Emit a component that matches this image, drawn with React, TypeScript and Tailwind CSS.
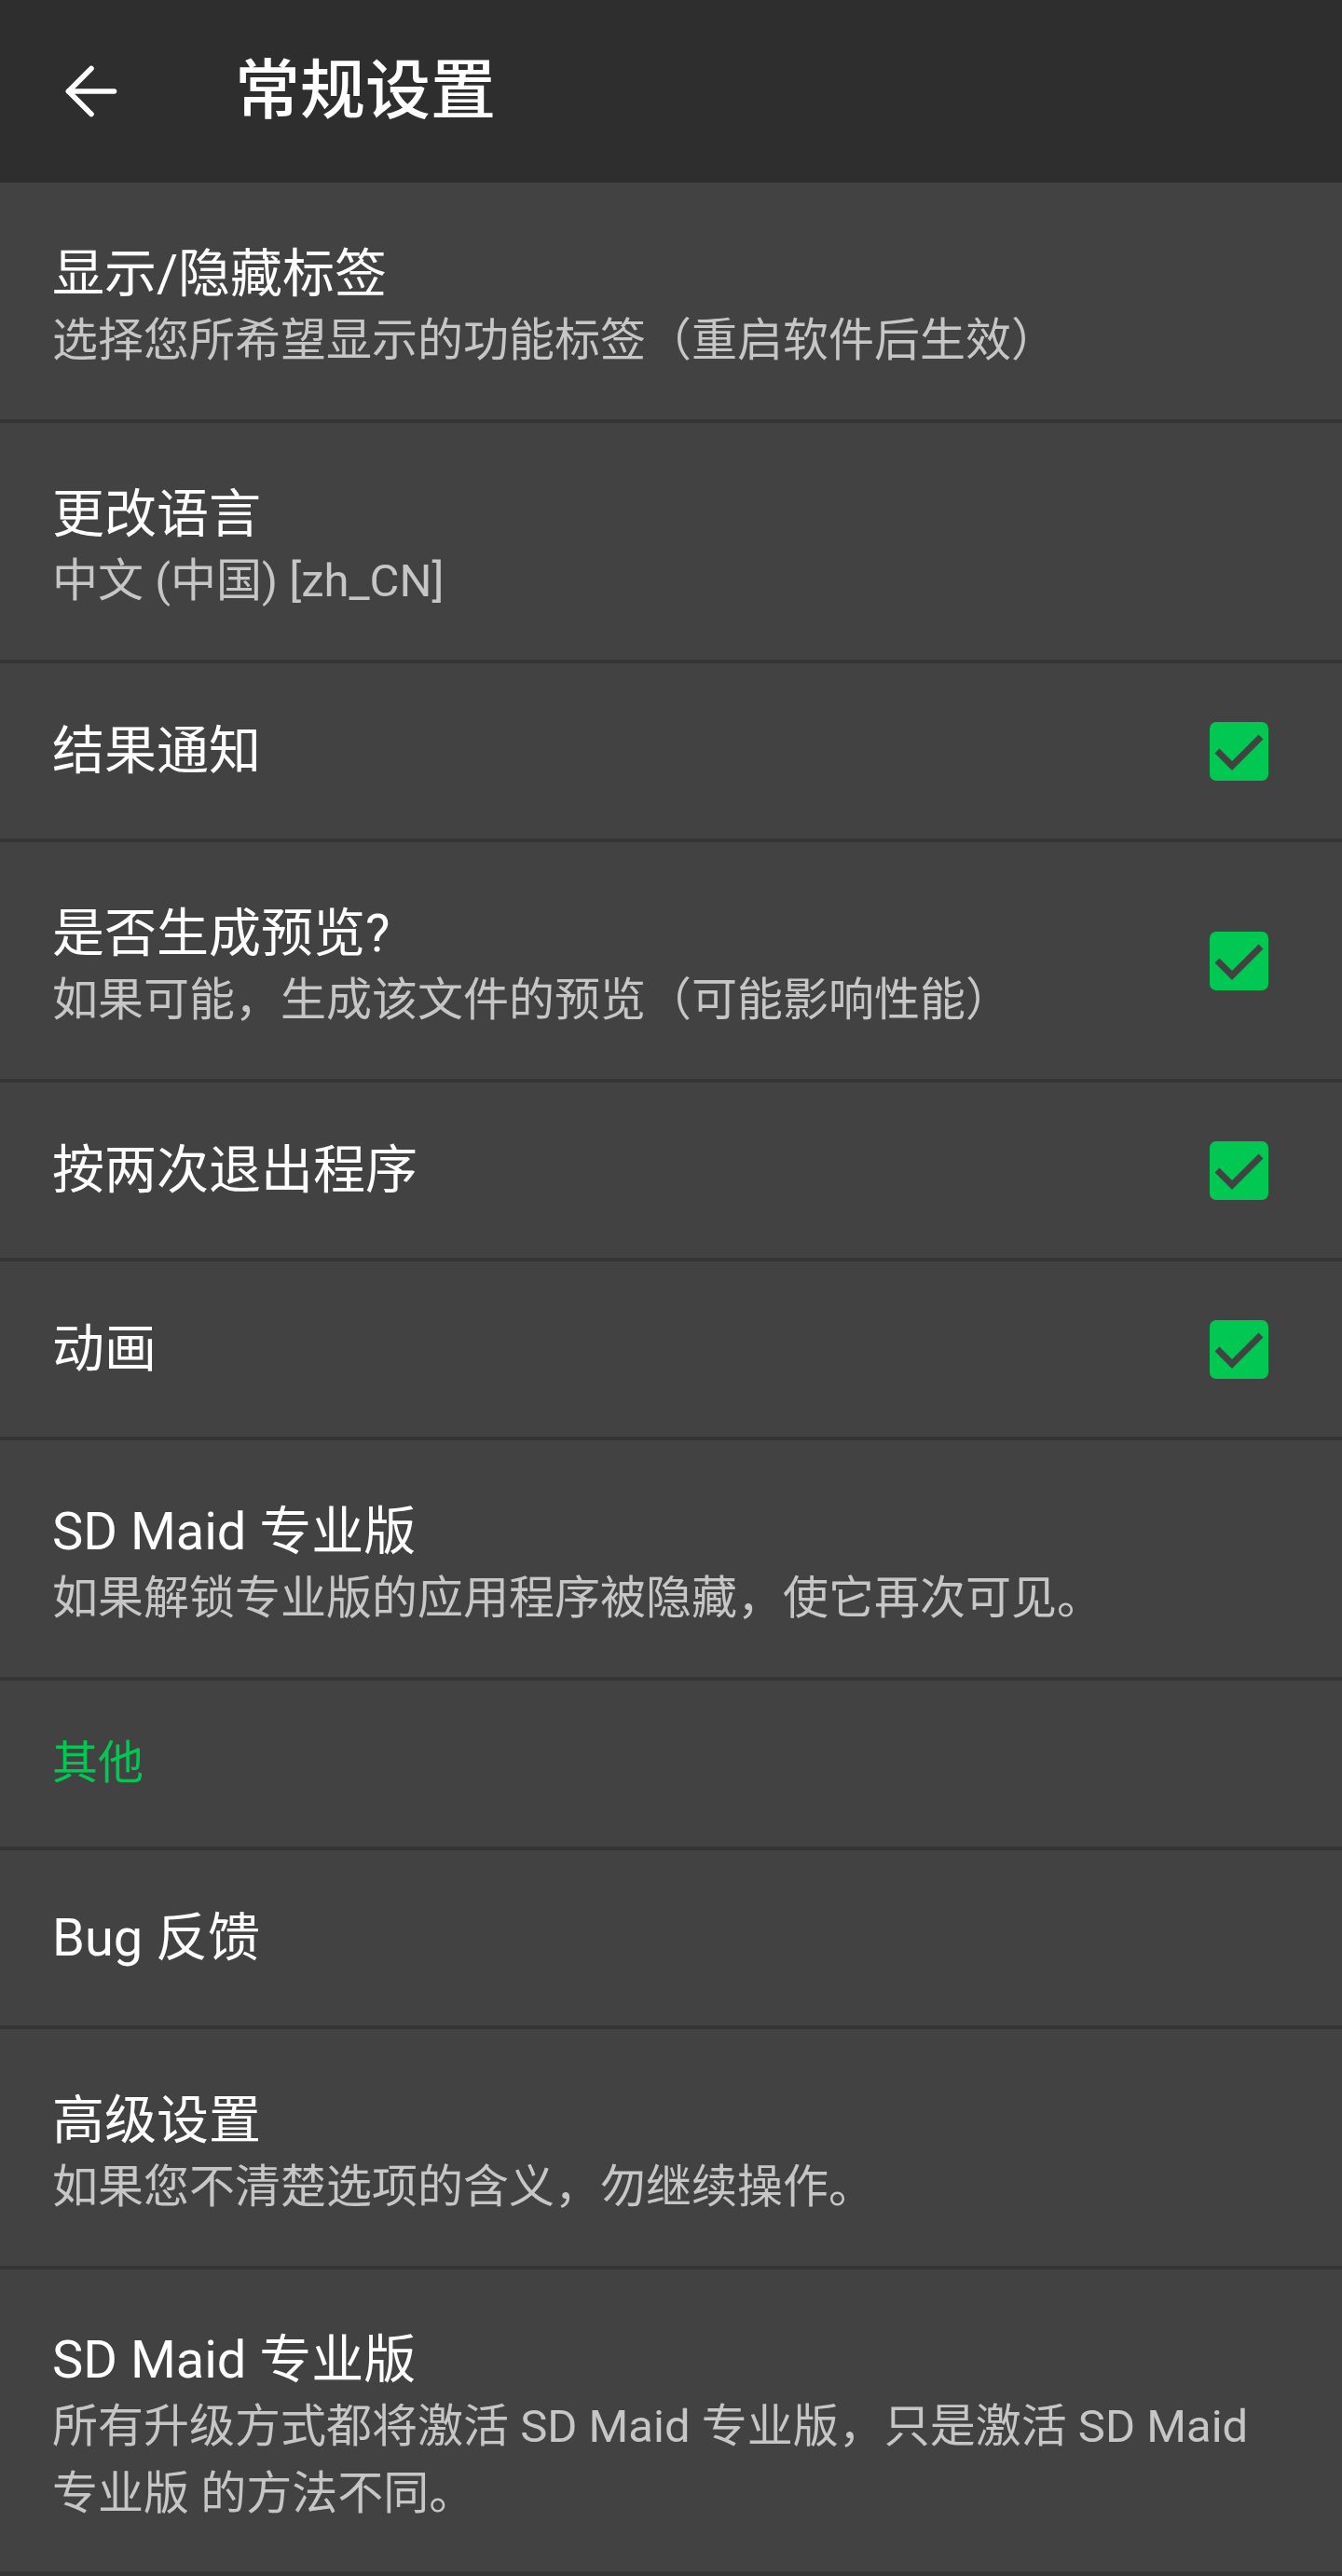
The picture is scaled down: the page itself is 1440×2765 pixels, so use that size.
import { ArrowLeft } from "lucide-react";

type Item = {
  title: string;
  summary?: string;
  checked?: boolean;
  h: string;
};

const CheckBox = () => (
  <svg width="63" height="63" viewBox="0 0 63 63" className="mr-[23px] shrink-0">
    <rect x="0" y="0" width="63" height="63" rx="7" fill="#00c853" />
    <polyline points="8,31 24,47 55,16" fill="none" stroke="#424242" strokeWidth="7" />
  </svg>
);

const Row = ({ item }: { item: Item }) => (
  <div className={`flex items-center bg-[#424242] px-[56px] ${item.h}`}>
    <div className={`flex flex-1 flex-col ${item.summary ? "pt-[14px]" : ""}`}>
      <div className={`text-[56px] text-white ${item.summary ? "leading-[72px]" : "leading-[66px]"}`}>
        {item.title}
      </div>
      {item.summary && (
        <div className="text-[49px] leading-[72px] text-[#c6c6c6]">{item.summary}</div>
      )}
    </div>
    {item.checked && <CheckBox />}
  </div>
);

const general: Item[] = [
  { title: "显示/隐藏标签", summary: "选择您所希望显示的功能标签（重启软件后生效）", h: "min-h-[254px]" },
  { title: "更改语言", summary: "中文 (中国) [zh_CN]", h: "min-h-[254px]" },
  { title: "结果通知", checked: true, h: "min-h-[188px]" },
  { title: "是否生成预览?", summary: "如果可能，生成该文件的预览（可能影响性能）", checked: true, h: "min-h-[254px]" },
  { title: "按两次退出程序", checked: true, h: "min-h-[188px]" },
  { title: "动画", checked: true, h: "min-h-[188px]" },
  { title: "SD Maid 专业版", summary: "如果解锁专业版的应用程序被隐藏，使它再次可见。", h: "min-h-[254px]" },
];

const other: Item[] = [
  { title: "Bug 反馈", h: "min-h-[188px]" },
  { title: "高级设置", summary: "如果您不清楚选项的含义，勿继续操作。", h: "min-h-[254px]" },
  {
    title: "SD Maid 专业版",
    summary: "所有升级方式都将激活 SD Maid 专业版，只是激活 SD Maid 专业版 的方法不同。",
    h: "min-h-[324px]",
  },
];

export default function App() {
  return (
    <div className="min-h-screen w-[1440px] bg-[#353535] font-['Roboto','Noto_Sans_CJK_SC',sans-serif]">
      <header className="flex h-[196px] items-center bg-[#2e2e2e] pl-[56px]">
        <ArrowLeft className="h-[84px] w-[84px] text-white" strokeWidth={1.6} />
        <h1 className="ml-[112px] text-[70px] font-medium text-white">常规设置</h1>
      </header>

      <div className="flex flex-col gap-[4px] pb-[4px]">
        {general.map((item, i) => (
          <Row key={i} item={item} />
        ))}
        <div className="flex min-h-[178px] items-center bg-[#424242] px-[56px]">
          <span className="text-[49px] leading-[66px] text-[#00c853]">其他</span>
        </div>
        {other.map((item, i) => (
          <Row key={i} item={item} />
        ))}
      </div>
    </div>
  );
}
